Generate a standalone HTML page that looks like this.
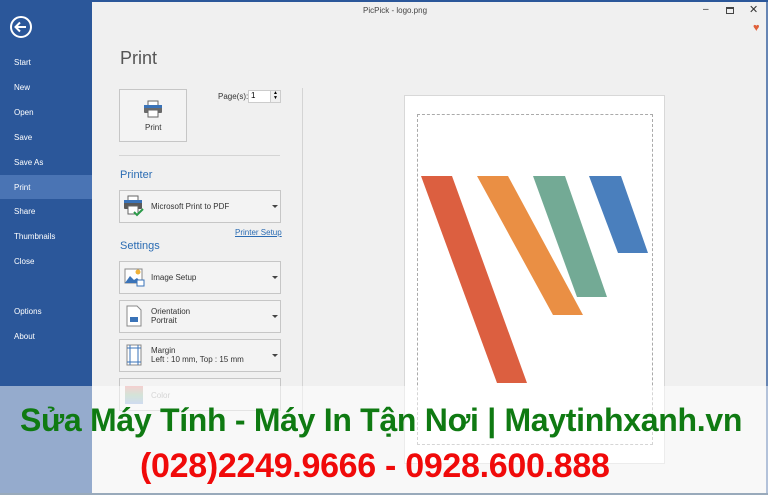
<!DOCTYPE html>
<html><head><meta charset="utf-8"><style>
*{margin:0;padding:0;box-sizing:border-box}
body{width:768px;height:495px;overflow:hidden;background:#f0f0f0;font-family:"Liberation Sans",sans-serif;position:relative}
.side{position:absolute;left:0;top:0;width:92px;height:495px;background:#2b579a}
.side div{position:absolute;left:14px;color:#fff;font-size:8px}
.sel{position:absolute;left:0;top:175px;width:92px;height:24px;background:#4a74b4}
.abs{position:absolute}
.box{position:absolute;border:1px solid #c6c6c6;background:#f3f3f3}
.t{font-size:8px;color:#333;position:absolute}
.arr{position:absolute;right:5px;width:0;height:0;border-left:3px solid transparent;border-right:3px solid transparent;border-top:3px solid #444}
.big{position:absolute;font-weight:bold;white-space:nowrap;letter-spacing:-0.3px}
</style></head><body>
<div class="side">
<svg class="abs" style="left:9px;top:15px" width="24" height="24" viewBox="0 0 24 24"><circle cx="12" cy="12" r="10" fill="none" stroke="#fff" stroke-width="2"/><path d="M17 12H7M11 7.5L6.5 12 11 16.5" fill="none" stroke="#fff" stroke-width="2"/></svg>
<div class="sel" style="left:0"></div>
<div style="top:58px">Start</div><div style="top:83px">New</div><div style="top:108px">Open</div><div style="top:133px">Save</div><div style="top:158px">Save As</div><div style="top:183px">Print</div><div style="top:207px">Share</div><div style="top:232px">Thumbnails</div><div style="top:257px">Close</div><div style="top:307px">Options</div><div style="top:332px">About</div>
</div>
<div class="abs" style="left:92px;top:0;width:676px;height:2px;background:#2b579a"></div>
<div class="abs" style="left:766px;top:0;width:2px;height:495px;background:#2b579a;opacity:.7"></div>
<div class="t" style="left:363px;top:6px;color:#444">PicPick - logo.png</div>
<div class="t" style="left:703px;top:4px;font-size:10px">–</div>
<div class="abs" style="left:726px;top:7px;width:8px;height:7px;border:1px solid #444;border-top-width:2px"></div>
<div class="t" style="left:749px;top:3px;font-size:11px">✕</div>
<div class="abs" style="left:753px;top:22px;color:#e0603a;font-size:11px">♥</div>
<div class="abs" style="left:120px;top:48px;font-size:18px;color:#555">Print</div>
<div class="box" style="left:119px;top:89px;width:68px;height:53px"></div>
<svg class="abs" style="left:143px;top:100px" width="20" height="18" viewBox="0 0 20 18"><rect x="5" y="1" width="10" height="5" fill="#fff" stroke="#666"/><rect x="1" y="5" width="18" height="8" rx="1" fill="#6a6a6a"/><rect x="1" y="5" width="18" height="3" fill="#3a73b8"/><rect x="5" y="10" width="10" height="7" fill="#fff" stroke="#666"/></svg>
<div class="t" style="left:145px;top:123px">Print</div>
<div class="t" style="left:218px;top:92px">Page(s):</div>
<div class="abs" style="left:248px;top:90px;width:33px;height:13px;border:1px solid #ccc;background:#fff;font-size:8px;padding-left:2px">1<span style="position:absolute;right:0;top:0;width:10px;height:11px;background:#f0f0f0;border-left:1px solid #ccc;font-size:5px;text-align:center;line-height:5px">▲<br>▼</span></div>
<div class="abs" style="left:119px;top:155px;width:161px;height:1px;background:#d4d4d4"></div>
<div class="abs" style="left:302px;top:88px;width:1px;height:330px;background:#d4d4d4"></div>
<div class="abs" style="left:120px;top:169px;font-size:11px;color:#2b6cb3">Printer</div>
<div class="box" style="left:119px;top:190px;width:162px;height:33px"></div>
<svg class="abs" style="left:123px;top:195px" width="22" height="22" viewBox="0 0 22 22"><rect x="5" y="1" width="10" height="5" fill="#fff" stroke="#666"/><rect x="1" y="5" width="18" height="9" rx="1" fill="#5a5a5a"/><rect x="1" y="5" width="18" height="3" fill="#3a73b8"/><rect x="5" y="11" width="10" height="8" fill="#fff" stroke="#666"/><path d="M11 17l3 3 6-6" stroke="#2a9a48" stroke-width="2" fill="none"/></svg>
<div class="t" style="left:151px;top:202px">Microsoft Print to PDF</div><div class="arr" style="left:272px;top:205px"></div>
<div class="t" style="left:235px;top:228px;color:#2b6cb3;text-decoration:underline">Printer Setup</div>
<div class="abs" style="left:120px;top:240px;font-size:11px;color:#2b6cb3">Settings</div>
<div class="box" style="left:119px;top:261px;width:162px;height:33px"></div>
<svg class="abs" style="left:124px;top:267px" width="21" height="20" viewBox="0 0 21 20"><rect x="1" y="2" width="17" height="14" fill="#fff" stroke="#888"/><circle cx="14" cy="5" r="2.5" fill="#f0b23a"/><path d="M1 16l5-7 4 4 3-2 5 5z" fill="#3a73b8"/><rect x="13" y="13" width="7" height="6" fill="#fff" stroke="#3a73b8"/></svg>
<div class="t" style="left:151px;top:273px">Image Setup</div><div class="arr" style="left:272px;top:276px"></div>
<div class="box" style="left:119px;top:300px;width:162px;height:33px"></div>
<svg class="abs" style="left:126px;top:305px" width="16" height="22" viewBox="0 0 16 22"><path d="M1 1h10l4 4v16H1z" fill="#fff" stroke="#888"/><rect x="4" y="12" width="8" height="5" fill="#3a73b8"/></svg>
<div class="t" style="left:151px;top:307px">Orientation<br>Portrait</div><div class="arr" style="left:272px;top:315px"></div>
<div class="box" style="left:119px;top:339px;width:162px;height:33px"></div>
<svg class="abs" style="left:126px;top:344px" width="16" height="22" viewBox="0 0 16 22"><rect x="1" y="1" width="14" height="20" fill="#fff" stroke="#888"/><path d="M4 1v20M12 1v20M1 4h14M1 18h14" stroke="#3a73b8"/></svg>
<div class="t" style="left:151px;top:346px">Margin<br>Left : 10 mm, Top : 15 mm</div><div class="arr" style="left:272px;top:354px"></div>
<div class="box" style="left:119px;top:378px;width:162px;height:33px"></div>
<div class="abs" style="left:125px;top:386px;width:18px;height:18px;background:linear-gradient(#e8a0a0,#a8c8b0,#a0b8e0)"></div>
<div class="t" style="left:151px;top:391px;color:#aaa">Color</div>
<div class="abs" style="left:404px;top:95px;width:261px;height:369px;background:#fff;border:1px solid #d8d8d8"></div>
<div class="abs" style="left:417px;top:114px;width:236px;height:331px;border:1px dashed #aaa"></div>
<svg class="abs" style="left:0;top:0" width="768" height="495"><polygon points="421,176 452,176 527,383 497,383" fill="#dc5f40"/><polygon points="477,176 508,176 583,315 553,315" fill="#ea8f44"/><polygon points="533,176 565,176 607,297 577,297" fill="#73aa95"/><polygon points="589,176 621,176 648,253 618,253" fill="#4a7fbd"/></svg>
<div class="abs" style="left:0;top:386px;width:768px;height:109px;background:rgba(255,255,255,.5)"></div>
<div class="abs" style="left:0;top:493px;width:768px;height:2px;background:#9ab"></div>
<div class="big" style="left:20px;top:402px;font-size:32px;color:#0f7a12">Sửa Máy Tính - Máy In Tận Nơi | Maytinhxanh.vn</div>
<div class="big" style="left:140px;top:447px;font-size:34px;color:#f00a0a">(028)2249.9666 - 0928.600.888</div>
</body></html>
